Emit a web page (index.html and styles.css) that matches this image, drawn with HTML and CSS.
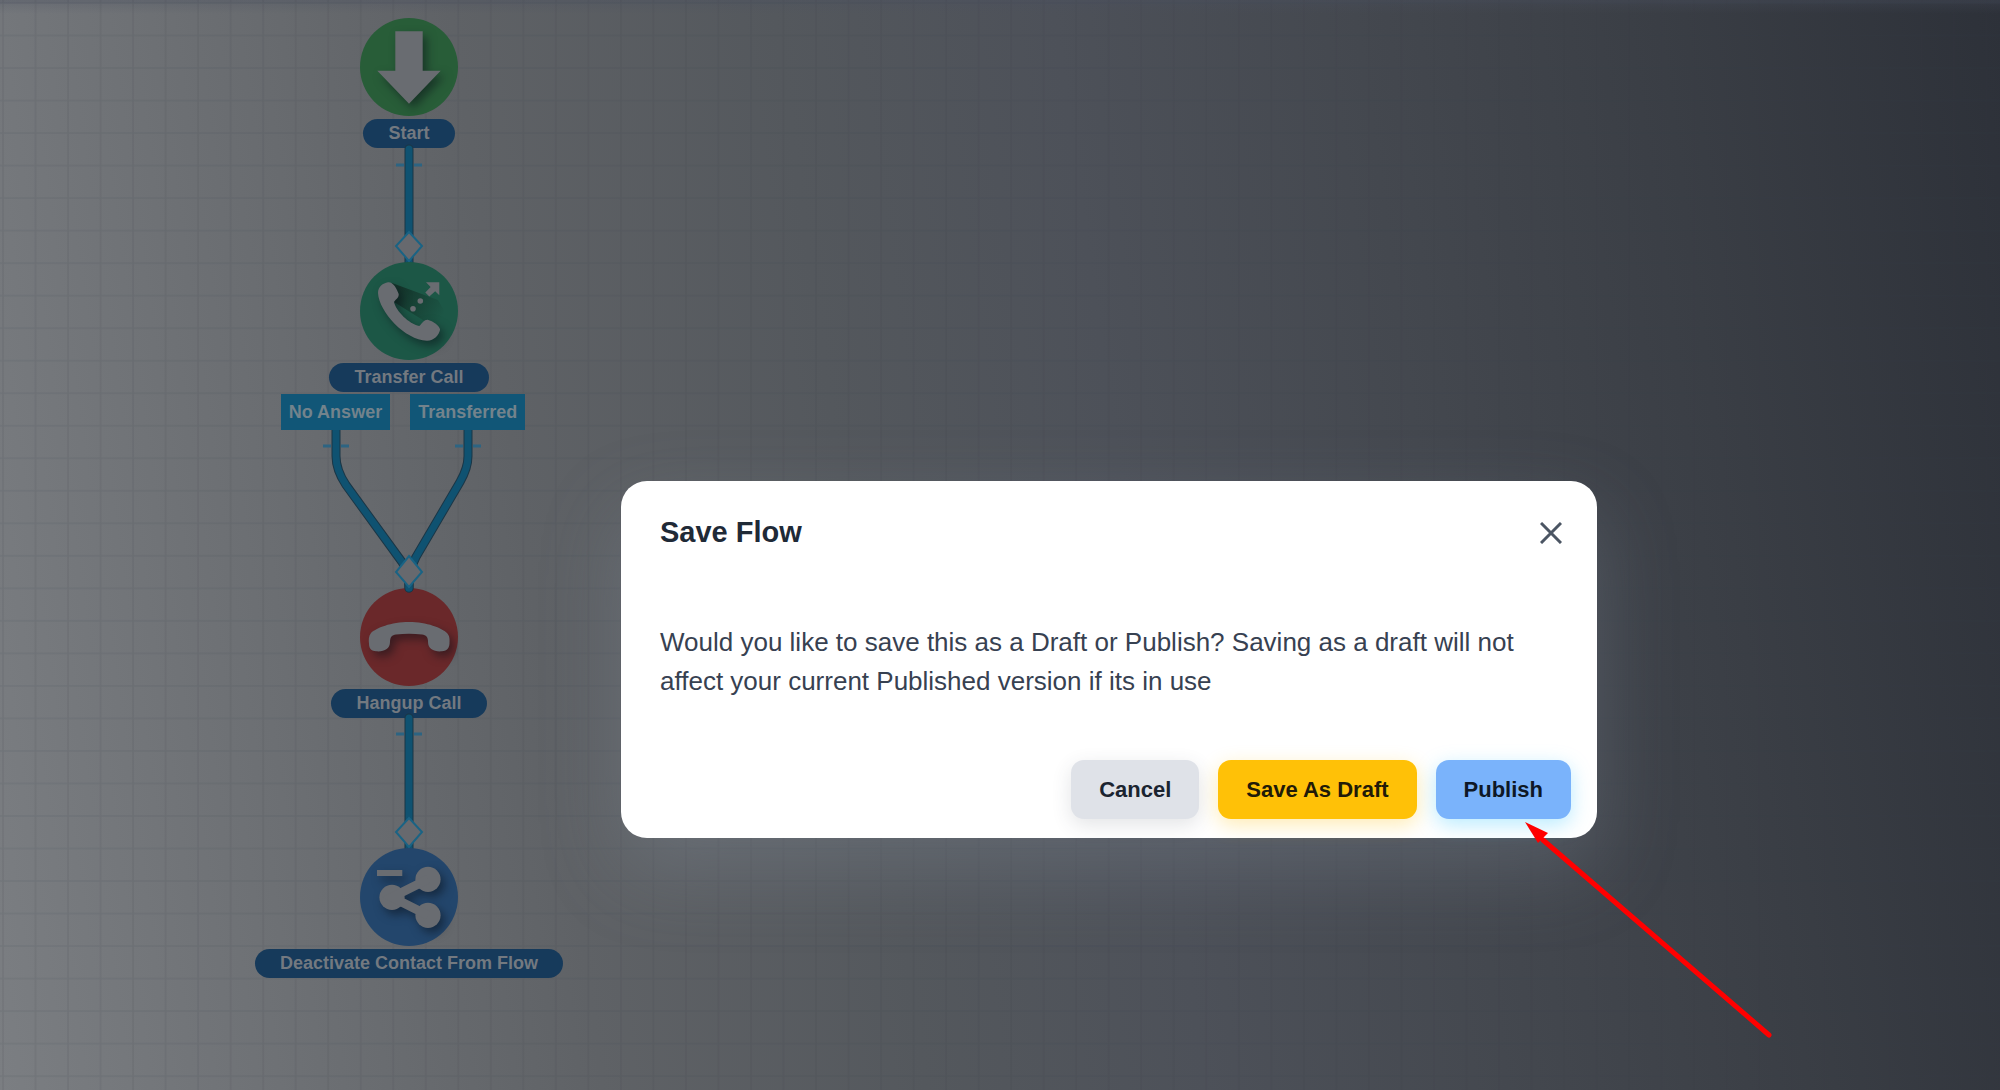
FILE: index.html
```html
<!DOCTYPE html>
<html lang="en">
<head>
<meta charset="utf-8">
<meta name="viewport" content="width=device-width, initial-scale=1">
<title>Flow Builder</title>
<link rel="stylesheet" href="styles.css">
</head>
<body>
<main class="canvas">
  <svg class="grid" width="100%" height="100%" aria-hidden="true">
    <defs>
      <pattern id="cell" x="2" y="2" width="32.52" height="32.52" patternUnits="userSpaceOnUse">
        <path d="M0 1H32.52M1 0V32.52" fill="none" stroke="#30353c" stroke-opacity=".11" stroke-width="1.6"/>
      </pattern>
    </defs>
    <rect width="100%" height="100%" fill="url(#cell)"/>
  </svg>

  <svg class="links" width="620" height="1000" viewBox="0 0 620 1000" aria-hidden="true">
    <g class="link-edge">
      <path d="M409 149V264"/>
      <path d="M336 430V456Q336 470 346 485L402 562Q409 572 409 588"/>
      <path d="M468 430V456Q468 468 460 482L416 557Q409 570 409 588"/>
      <path d="M409 718V856"/>
    </g>
    <g class="link-core">
      <path d="M409 149V264"/>
      <path d="M336 430V456Q336 470 346 485L402 562Q409 572 409 588"/>
      <path d="M468 430V456Q468 468 460 482L416 557Q409 570 409 588"/>
      <path d="M409 718V856"/>
    </g>
    <g class="ticks">
      <path d="M396 165H404M414 165H422M323 446H331M341 446H349M455 446H463M473 446H481M396 734H404M414 734H422"/>
    </g>
    <g class="diamonds">
      <path d="M409 232L422 246L409 261L396 246Z"/>
      <path d="M409 556L422 572L409 587L396 572Z"/>
      <path d="M409 818L422 832L409 847L396 832Z"/>
    </g>
  </svg>

  <section class="node node-start">
    <svg class="disc disc-green" viewBox="0 0 98 98" aria-hidden="true">
      <circle cx="49" cy="49" r="49"/>
      <path class="glyph" d="M35.3 13.3H62.7V52.7H80.7L49 85.7L17.3 52.7H35.3Z"/>
    </svg>
    <span class="label">Start</span>
  </section>

  <section class="node node-transfer">
    <svg class="disc disc-teal" viewBox="0 0 98 98" aria-hidden="true">
      <defs>
        <linearGradient id="cast" gradientUnits="userSpaceOnUse" x1="34" y1="36" x2="80" y2="60">
          <stop offset="0" stop-color="#10261f" stop-opacity=".7"/>
          <stop offset="1" stop-color="#10261f" stop-opacity="0"/>
        </linearGradient>
      </defs>
      <circle cx="49" cy="49" r="49"/>
      <path fill="url(#cast)" d="M32 21L78 38L94 66L78 86L60 78L66 60L34 40Z"/>
      <path class="glyph" d="M28 20.3C23 21 18 25 18 31C19 50 45 78 66.7 78.7C74 79 79 73 80 68C80.5 64 73 59 67.7 57.7C64 57.5 62.5 61 59.3 64C49 62 36 49 34 40C36 37 39 36 38.7 32C37 27 33 19.5 28 20.3Z"/>
      <g class="glyph-flat">
        <circle cx="53" cy="46.7" r="2.8"/>
        <circle cx="60.3" cy="39" r="2.8"/>
        <path d="M66 20.3H79.3V33.3L75.2 29.2L69.3 34.4L65.3 30.5L70.6 25Z"/>
      </g>
    </svg>
    <span class="label">Transfer Call</span>
    <div class="outcomes">
      <span class="outcome">No Answer</span>
      <span class="outcome">Transferred</span>
    </div>
  </section>

  <section class="node node-hangup">
    <svg class="disc disc-red" viewBox="0 0 98 98" aria-hidden="true">
      <circle cx="49" cy="49" r="49"/>
      <path class="glyph" d="M49 34C67 34 82 40 87 45C90 48 89.7 52 89.5 56C89 61 86 63 82 63.3C74 64 68 61 68 54C68 49 66 47 62 46.5Q49 45 36 46.5C32 47 30 49 30 54C30 61 24 64 16 63.3C12 63 9 61 9 56C8.5 52 8.5 48 11 45C16 40 31 34 49 34Z"/>
    </svg>
    <span class="label">Hangup Call</span>
  </section>

  <section class="node node-deactivate">
    <svg class="disc disc-blue" viewBox="0 0 98 98" aria-hidden="true">
      <circle cx="49" cy="49" r="49"/>
      <g class="glyph">
        <path d="M17 22H42.3V28H17Z"/>
        <circle cx="68" cy="31.3" r="12.6"/>
        <circle cx="32" cy="49.3" r="12.6"/>
        <circle cx="68" cy="67.3" r="12.6"/>
        <path class="branch" d="M68 31.3L32 49.3L68 67.3"/>
      </g>
    </svg>
    <span class="label">Deactivate Contact From Flow</span>
  </section>
</main>

<div class="overlay">
  <div class="dialog" role="dialog" aria-modal="true" aria-labelledby="dialog-title">
    <header class="dialog-header">
      <h2 class="dialog-title" id="dialog-title">Save Flow</h2>
      <button class="close" type="button" aria-label="Close">
        <svg viewBox="0 0 22 22" width="22" height="22" aria-hidden="true"><path d="M1 1L21 21M21 1L1 21"/></svg>
      </button>
    </header>
    <p class="dialog-body">Would you like to save this as a Draft or Publish? Saving as a draft will not affect your current Published version if its in use</p>
    <footer class="dialog-footer">
      <button class="btn btn-cancel" type="button">Cancel</button>
      <button class="btn btn-draft" type="button">Save As Draft</button>
      <button class="btn btn-publish" type="button">Publish</button>
    </footer>
  </div>
</div>

<svg class="pointer" width="250" height="220" viewBox="0 0 250 220" aria-hidden="true">
  <path class="pointer-line" d="M18 18L244 213"/>
  <path class="pointer-head" d="M0 0L23 11L19 15L16 18L13 21Z"/>
</svg>
</body>
</html>
```

FILE: styles.css
```css
* {
  box-sizing: border-box;
}

body {
  margin: 0;
  min-height: 100vh;
  position: relative;
  overflow: hidden;
  font-family: "Liberation Sans", Arial, sans-serif;
  background: #53575c;
}

/* Flow canvas */
.canvas {
  position: relative;
  min-height: 100vh;
  background:
    linear-gradient(180deg, rgba(74, 80, 96, .35) 0, rgba(74, 80, 96, .35) 3px, rgba(74, 80, 96, .2) 4px, rgba(74, 80, 96, 0) 14px),
    linear-gradient(82deg, #7b7e82 0%, #6d7074 14%, #5f6266 28%, #54585d 43%, #4d5159 56%, #44484f 70%, #3a3e45 84%, #2d3139 100%);
}

.grid {
  position: absolute;
  inset: 0;
}

.links {
  position: absolute;
  left: 0;
  top: 0;
  z-index: 2;
}

.link-edge path,
.link-core path {
  fill: none;
  stroke-linecap: round;
}

.link-edge path {
  stroke: #1b3646;
  stroke-width: 9;
}

.link-core path {
  stroke: #0f5271;
  stroke-width: 7;
}

.ticks path {
  stroke: #2d6482;
  stroke-width: 3;
}

.diamonds path {
  fill: #67696e;
  stroke: #1a6384;
  stroke-width: 2;
}

.node {
  position: absolute;
  left: 249px;
  width: 320px;
  display: flex;
  flex-direction: column;
  align-items: center;
}

.node-start { top: 18px; }
.node-transfer { top: 262px; }
.node-hangup { top: 588px; }
.node-deactivate { top: 848px; }

.disc {
  position: relative;
  z-index: 3;
  width: 98px;
  height: 98px;
  margin-bottom: 3px;
}

.node-hangup .disc {
  z-index: 1;
}

.disc-green { fill: #285d38; }
.disc-teal { fill: #1c5746; }
.disc-red { fill: #6a282a; }
.disc-blue { fill: #23466c; }

.glyph {
  fill: #696c71;
  filter: drop-shadow(4px 5px 5px rgba(8, 14, 22, .5));
}

.glyph-flat {
  fill: #696c71;
}

.branch {
  fill: none;
  stroke: #696c71;
  stroke-width: 9;
}

.label,
.outcome {
  font-size: 18px;
  font-weight: 700;
  white-space: nowrap;
}

.label {
  height: 29px;
  padding: 0 25px;
  border-radius: 15px;
  background: #163a5b;
  color: #737980;
  line-height: 29px;
}

.outcomes {
  position: relative;
  z-index: 3;
  display: flex;
  gap: 20px;
  margin: 2px 12px 0 0;
}

.outcome {
  height: 36px;
  padding: 0 8px;
  background: #115677;
  color: #73838c;
  line-height: 36px;
}

/* Save dialog */
.overlay {
  position: absolute;
  inset: 0;
  z-index: 4;
  display: flex;
  align-items: center;
  justify-content: center;
  padding: 229px 0 0 218px;
}

.dialog {
  width: 976px;
  max-width: 100%;
  border-radius: 26px;
  background: #fff;
  box-shadow: 0 32px 80px rgba(140, 150, 165, .28);
}

.dialog-header {
  display: flex;
  align-items: center;
  justify-content: space-between;
  padding: 32px 35px 0 39px;
}

.dialog-title {
  margin: 0;
  color: #1f2a37;
  font-size: 29px;
  line-height: 39px;
}

.close {
  display: flex;
  padding: 0;
  border: 0;
  background: none;
}

.close path {
  stroke: #4b5563;
  stroke-width: 3;
}

.dialog-body {
  margin: 71px 39px 59px;
  color: #374151;
  font-size: 26px;
  line-height: 39px;
}

.dialog-footer {
  display: flex;
  justify-content: flex-end;
  gap: 19px;
  padding: 0 26px 19px;
}

.btn {
  height: 59px;
  padding: 0 28px;
  border: 0;
  border-radius: 13px;
  font-family: inherit;
  font-size: 22px;
  font-weight: 700;
}

.btn-cancel {
  background: #dfe2e8;
  color: #1b2430;
  box-shadow: 0 6px 20px rgba(55, 65, 81, .14);
}

.btn-draft {
  background: #ffc107;
  color: #211a08;
  box-shadow: 0 6px 20px rgba(255, 193, 7, .3);
}

.btn-publish {
  background: #7ab3fb;
  color: #0e1826;
  box-shadow: 0 6px 20px rgba(80, 205, 255, .4);
}

/* Callout arrow */
.pointer {
  position: absolute;
  left: 1525px;
  top: 822px;
  z-index: 5;
}

.pointer-line {
  stroke: #f00;
  stroke-width: 5;
  stroke-linecap: round;
}

.pointer-head {
  fill: #f00;
}
```
